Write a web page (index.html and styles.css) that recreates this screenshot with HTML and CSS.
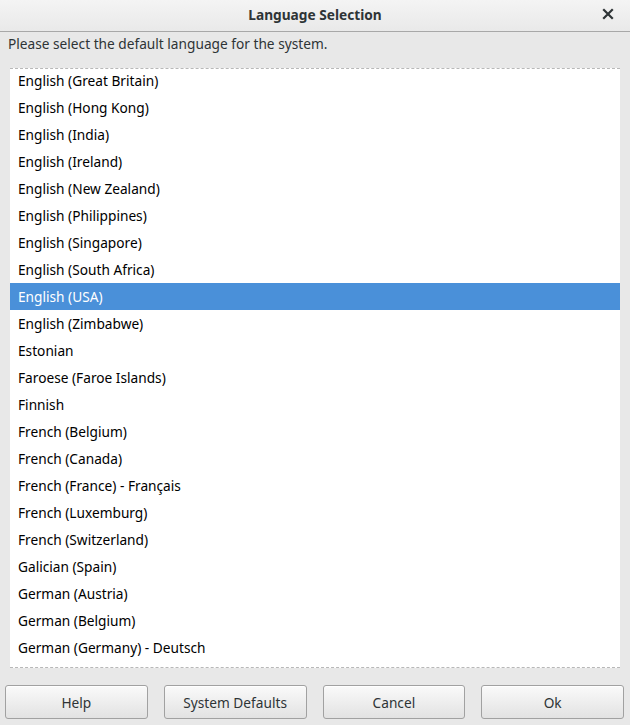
FILE: index.html
```html
<!DOCTYPE html>
<html lang="en">
  <head>
    <meta charset="UTF-8">
    <title>Language Selection</title>
    <link rel="stylesheet" href="styles.css">
  </head>
  <body>
    <div class="dialog">
      <div class="titlebar">
        <span class="title">Language Selection</span>
        <span class="close">
          <svg width="12" height="12" viewBox="0 0 12 12">
            <path d="M2 2 L10 10 M10 2 L2 10" stroke="#2e3436" stroke-width="2.2" stroke-linecap="square"/>
          </svg>
        </span>
      </div>
      <div class="content">
        <p class="prompt">Please select the default language for the system.</p>
        <div class="list">
          <div class="row">English (Great Britain)</div>
          <div class="row">English (Hong Kong)</div>
          <div class="row">English (India)</div>
          <div class="row">English (Ireland)</div>
          <div class="row">English (New Zealand)</div>
          <div class="row">English (Philippines)</div>
          <div class="row">English (Singapore)</div>
          <div class="row">English (South Africa)</div>
          <div class="row selected">English (USA)</div>
          <div class="row">English (Zimbabwe)</div>
          <div class="row">Estonian</div>
          <div class="row">Faroese (Faroe Islands)</div>
          <div class="row">Finnish</div>
          <div class="row">French (Belgium)</div>
          <div class="row">French (Canada)</div>
          <div class="row">French (France) - Français</div>
          <div class="row">French (Luxemburg)</div>
          <div class="row">French (Switzerland)</div>
          <div class="row">Galician (Spain)</div>
          <div class="row">German (Austria)</div>
          <div class="row">German (Belgium)</div>
          <div class="row">German (Germany) - Deutsch</div>
        </div>
        <div class="buttons">
          <button>Help</button>
          <button>System Defaults</button>
          <button>Cancel</button>
          <button>Ok</button>
        </div>
      </div>
    </div>
  </body>
</html>
```

FILE: styles.css
```css
body {
  margin: 0;
  font-family: "Noto Sans", "DejaVu Sans", sans-serif;
  font-size: 13.7px;
  color: #2e3436;
  background-color: #e8e8e8;
}

.dialog {
  width: 630px;
  height: 725px;
  display: flex;
  flex-direction: column;
  overflow: hidden;
}

.titlebar {
  height: 31px;
  flex: none;
  display: flex;
  align-items: center;
  justify-content: center;
  position: relative;
  background: linear-gradient(#f4f4f4, #e9e9e9);
  border-bottom: 1px solid #a8a8a8;
}

.title {
  font-weight: bold;
  color: #2e3436;
  margin-top: -3px;
}

.close {
  position: absolute;
  right: 16px;
  top: 8px;
  width: 12px;
  height: 12px;
  display: flex;
}

.content {
  flex: 1;
  display: flex;
  flex-direction: column;
  padding: 0 5px 0 5px;
}

.prompt {
  margin: 0;
  padding: 2px 3px 0;
  height: 20px;
  line-height: 20px;
}

.list {
  margin: 14px 5px 0;
  background-color: #fff;
  border-top: 1px dashed #b8b8b8;
  border-bottom: 1px dashed #b8b8b8;
  height: 600px;
  box-sizing: border-box;
  overflow: hidden;
  color: #000;
}

.row {
  height: 27px;
  line-height: 27px;
  padding-left: 8px;
  margin-top: -1px;
  margin-bottom: 1px;
}

.row:first-child {
  margin-top: -2px;
}

.row.selected {
  background-color: #4a90d9;
  color: #fff;
}

.buttons {
  display: flex;
  gap: 16px;
  margin-top: 17px;
  padding-right: 1px;
}

button {
  flex: 1;
  height: 34px;
  font-family: inherit;
  font-size: 13.7px;
  color: #2e3436;
  border: 1px solid #a1a1a1;
  border-radius: 3px;
  background: linear-gradient(#fafafa, #e2e2e2);
  box-shadow: inset 0 1px #fff;
  padding: 0;
}
```
